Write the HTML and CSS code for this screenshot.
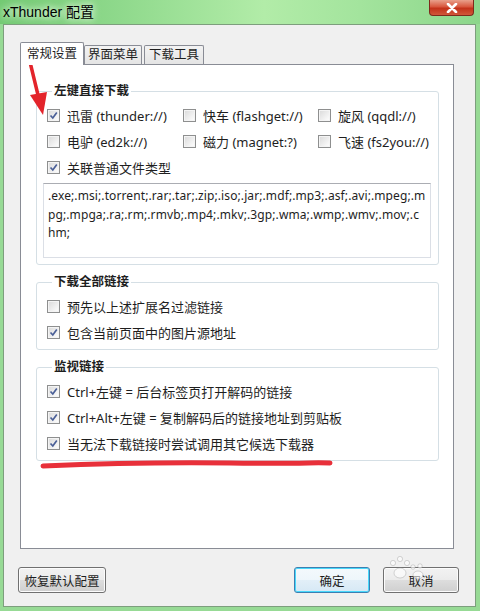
FILE: index.html
```html
<!DOCTYPE html>
<html lang="zh-CN">
  <head>
    <meta charset="UTF-8" />
    <title>xThunder 配置</title>
    <link rel="stylesheet" href="styles.css">
  </head>
  <body>
    <div class="window">
      <div class="titlebar">
        <span class="title">xThunder 配置</span>
        <button class="close" aria-label="关闭">
          <svg width="12" height="10" viewBox="0 0 12 10">
            <path d="M2 1 L10 9 M10 1 L2 9" stroke="#fff" stroke-width="2.6" stroke-linecap="round" />
          </svg>
        </button>
      </div>

      <div class="client">
        <div class="tabs">
          <div class="tab active">常规设置</div>
          <div class="tab">界面菜单</div>
          <div class="tab last">下载工具</div>
        </div>

        <div class="panel">
          <fieldset class="group">
            <legend>左键直接下载</legend>
            <div class="grid3">
              <label class="check"><span class="box"><svg viewBox="0 0 9 9"><path d="M1.5 4.5 L3.8 7 L7.8 1.5" /></svg></span>迅雷 (thunder://)</label>
              <label class="check"><span class="box"></span>快车 (flashget://)</label>
              <label class="check"><span class="box"></span>旋风 (qqdl://)</label>
              <label class="check"><span class="box"></span>电驴 (ed2k://)</label>
              <label class="check"><span class="box"></span>磁力 (magnet:?)</label>
              <label class="check"><span class="box"></span>飞速 (fs2you://)</label>
            </div>
            <label class="check"><span class="box"><svg viewBox="0 0 9 9"><path d="M1.5 4.5 L3.8 7 L7.8 1.5" /></svg></span>关联普通文件类型</label>
            <div class="ext-box">.exe;.msi;.torrent;.rar;.tar;.zip;.iso;.jar;.mdf;.mp3;.asf;.avi;.mpeg;.m<br>pg;.mpga;.ra;.rm;.rmvb;.mp4;.mkv;.3gp;.wma;.wmp;.wmv;.mov;.c<br>hm;</div>
          </fieldset>

          <fieldset class="group">
            <legend>下载全部链接</legend>
            <label class="check"><span class="box"></span>预先以上述扩展名过滤链接</label>
            <label class="check"><span class="box"><svg viewBox="0 0 9 9"><path d="M1.5 4.5 L3.8 7 L7.8 1.5" /></svg></span>包含当前页面中的图片源地址</label>
          </fieldset>

          <fieldset class="group">
            <legend>监视链接</legend>
            <label class="check"><span class="box"><svg viewBox="0 0 9 9"><path d="M1.5 4.5 L3.8 7 L7.8 1.5" /></svg></span>Ctrl+左键 = 后台标签页打开解码的链接</label>
            <label class="check"><span class="box"><svg viewBox="0 0 9 9"><path d="M1.5 4.5 L3.8 7 L7.8 1.5" /></svg></span>Ctrl+Alt+左键 = 复制解码后的链接地址到剪贴板</label>
            <label class="check"><span class="box"><svg viewBox="0 0 9 9"><path d="M1.5 4.5 L3.8 7 L7.8 1.5" /></svg></span>当无法下载链接时尝试调用其它候选下载器</label>
          </fieldset>
        </div>

        <div class="footer">
          <button class="btn">恢复默认配置</button>
          <button class="btn default">确定</button>
          <button class="btn">取消</button>
        </div>
      </div>

      <!-- red hand-drawn annotations and the faint site watermark on top -->
      <svg class="annotations" width="480" height="611" viewBox="0 0 480 611">
        <path d="M30 62 L38 95" stroke="#e3242b" stroke-width="3.5" stroke-linecap="round" />
        <path d="M30 95 L47 92 L43 115 Z" fill="#e3242b" />
        <path d="M43 466 C 90 464, 150 462, 230 463 S 310 462, 330 463" stroke="#e8303a" stroke-width="5" fill="none" stroke-linecap="round" />
        <g fill="#fff" fill-opacity="0.6" stroke="#9a9a9a" stroke-opacity="0.5" stroke-width="0.8">
          <ellipse cx="400" cy="573" rx="6" ry="5" />
          <circle cx="393" cy="563" r="2.6" />
          <circle cx="400" cy="559" r="2.6" />
          <circle cx="407" cy="563" r="2.6" />
          <ellipse cx="418" cy="575" rx="5" ry="4" />
          <circle cx="413" cy="567" r="2.2" />
          <circle cx="420" cy="566" r="2.2" />
        </g>
      </svg>
    </div>
  </body>
</html>
```

FILE: styles.css
```css
:root {
  --frame: #97da95;
  --tab-border: #898c95;
  --group-border: #d5dfe5;
  --text: #1e1e1e;
}

* {
  margin: 0;
  padding: 0;
  box-sizing: border-box;
}

body {
  font-family: "Noto Sans", "Noto Sans CJK SC", sans-serif;
  font-size: 13px;
  color: var(--text);
  background: var(--frame);
}

.window {
  position: relative;
  width: 480px;
  height: 611px;
  background: var(--frame);
  overflow: hidden;
}

.titlebar {
  height: 24px;
  display: flex;
  align-items: flex-start;
  justify-content: space-between;
  padding-left: 3px;
  background: linear-gradient(90deg, #73ca73 0%, #8fd98c 25%, #b2eca8 55%, #a3e49d 75%, #8cd68b 100%);
}

.title {
  font-family: "Liberation Sans", "Noto Sans CJK SC", sans-serif;
  font-size: 14px;
  line-height: 24px;
  color: #000;
  text-shadow: 0 0 6px #e8f8e4, 0 0 10px #e8f8e4;
}

.close {
  width: 45px;
  height: 16px;
  margin-right: 6px;
  border: 1px solid #7e2a1c;
  border-top: none;
  border-radius: 0 0 4px 4px;
  background: linear-gradient(#e9a08b 0%, #d8573e 45%, #c3321a 55%, #d0583a 100%);
  display: flex;
  align-items: center;
  justify-content: center;
}

.client {
  height: 583px;
  margin: 0 4px 0 3px;
  border: 1px solid #7d9e7d;
  background: #f0f0f0;
  display: flex;
  flex-direction: column;
  padding: 17px 0 13px;
}

/* tabs */
.tabs {
  display: flex;
  align-items: flex-end;
  padding-left: 16px;
}

.tab {
  height: 19px;
  padding: 0 3px;
  border: 1px solid var(--tab-border);
  border-bottom: none;
  border-radius: 2px 2px 0 0;
  background: linear-gradient(#f3f3f3, #e4e4e4);
  font-size: 12.5px;
  line-height: 18px;
  white-space: nowrap;
}

.tab.active {
  height: 23px;
  padding: 0 6px;
  margin-bottom: -1px;
  background: #fff;
  line-height: 21px;
  position: relative;
  z-index: 1;
}

.tab.last {
  margin-left: 2px;
  padding: 0 4px;
}

.panel {
  flex: 1;
  margin: 0 21px 0 16px;
  border: 1px solid var(--tab-border);
  background: #fff;
  padding: 19px 14px 0 15px;
}

/* group boxes */
.group {
  min-width: 0;
  border: 1px solid var(--group-border);
  border-radius: 3px;
  padding: 4px 0 4px 10px;
  margin-bottom: 10px;
}

.group legend {
  margin-left: 5px;
  padding: 0 2px;
  font-weight: bold;
  font-size: 12.5px;
  line-height: 14px;
}

.grid3 {
  display: grid;
  grid-template-columns: 136px 135px auto;
}

.check {
  display: flex;
  align-items: center;
  gap: 7px;
  height: 26px;
  white-space: nowrap;
}

.box {
  width: 13px;
  height: 13px;
  flex: none;
  border: 1px solid #8e8f8f;
  background: linear-gradient(135deg, #d9d9d9, #f4f4f4 70%, #fff);
  box-shadow: inset 0 0 0 1px #f4f4f4;
  display: flex;
  align-items: center;
  justify-content: center;
}

.box svg {
  width: 9px;
  height: 9px;
}

.box path {
  fill: none;
  stroke: #4a5f97;
  stroke-width: 1.7;
}

.ext-box {
  height: 75px;
  margin: 3px 7px 2px -4px;
  padding: 3px 4px;
  border: 1px solid #dbdfe6;
  border-top-color: #abadb3;
  font-size: 12px;
  letter-spacing: 0.1px;
  line-height: 18.5px;
  white-space: nowrap;
}

/* dialog buttons */
.footer {
  display: flex;
  gap: 13px;
  margin-top: 18px;
  padding: 0 16px 0 14px;
}

.btn {
  height: 26px;
  width: 76px;
  border: 1px solid #707070;
  border-radius: 3px;
  background: linear-gradient(#f2f2f2 0%, #ebebeb 50%, #dddddd 51%, #cfcfcf 100%);
  box-shadow: inset 0 0 0 1px #fcfcfc;
  font-family: inherit;
  font-size: 12.5px;
  color: var(--text);
}

.btn:first-child {
  width: 88px;
  margin-right: auto;
}

.btn.default {
  border-color: #3c7fb1;
  box-shadow: inset 0 0 0 1px #48d8fb;
  background: linear-gradient(#f4f9fc 0%, #eef6fb 50%, #e2eff8 51%, #d6e8f5 100%);
}

/* overlays */
.annotations {
  position: absolute;
  left: 0;
  top: 0;
  pointer-events: none;
}
```
